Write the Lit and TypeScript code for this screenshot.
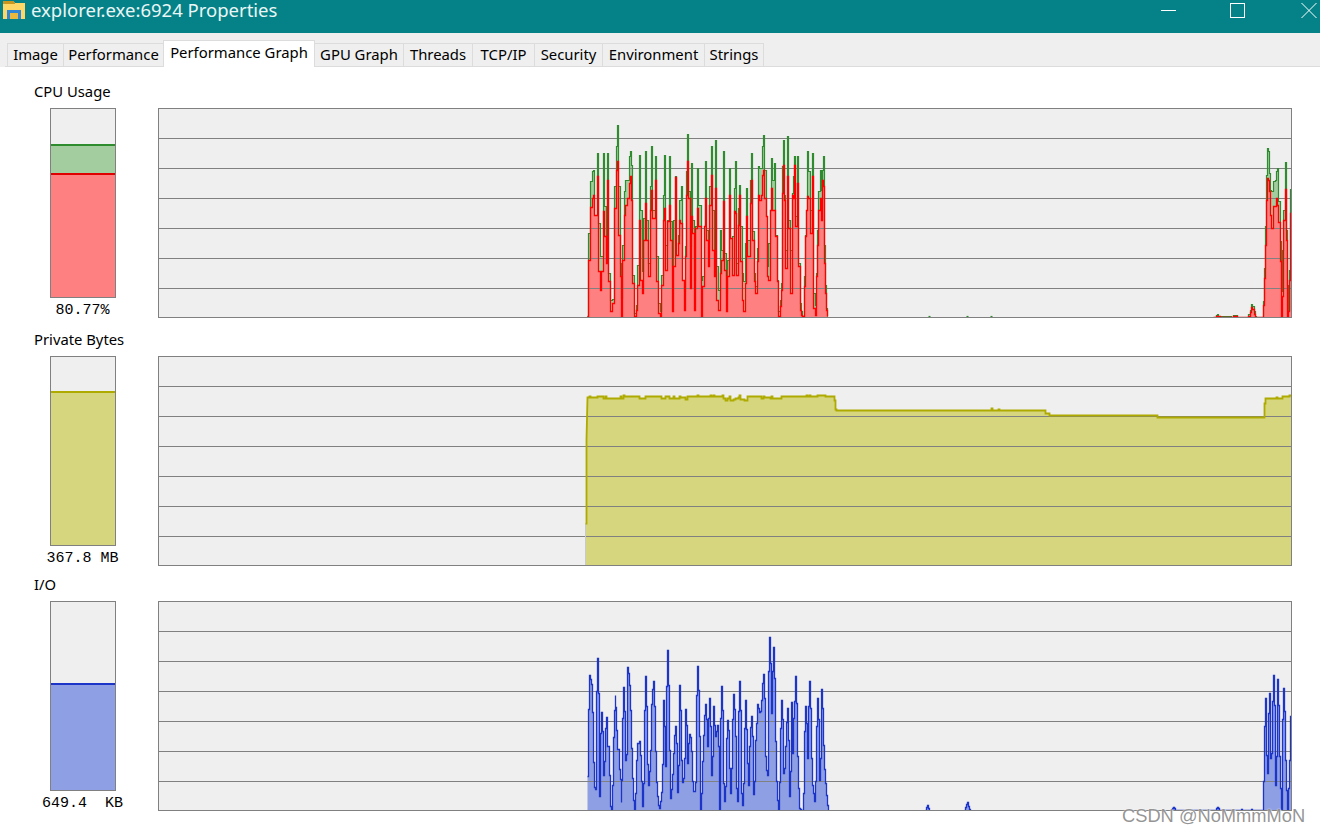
import { LitElement, html, css, svg } from "lit";
import { customElement } from "lit/decorators.js";

type Pt = [number, number];

const W = 1134;
const H = 210;
const GX = 158;

// [zoom x, green top, red top]; zoom space = 3x from page (580,120)
const CPU: number[][] = [[22,590,590],[25,340,420],[30,185,262],[36,155,235],[40,150,225],[46,285,285],[52,100,170],[57,310,455],[62,410,510],[65,410,455],[70,100,275],[75,260,350],[78,405,430],[82,100,180],[87,460,485],[92,540,575],[97,538,550],[103,200,265],[108,80,150],[112,15,125],[116,200,345],[120,430,470],[125,535,590],[128,375,420],[132,215,285],[137,180,255],[142,180,235],[147,110,190],[150,95,170],[154,135,240],[158,465,490],[163,580,590],[168,555,570],[172,435,495],[178,105,300],[183,270,480],[187,455,520],[191,295,360],[196,95,250],[201,300,360],[205,430,470],[210,200,270],[215,80,210],[220,270,295],[225,110,180],[230,410,485],[235,550,580],[240,575,590],[245,465,495],[249,225,300],[252,105,265],[258,375,450],[263,300,305],[268,110,255],[273,305,360],[277,440,575],[281,300,440],[286,170,172],[290,405,405],[294,345,370],[298,240,300],[303,200,310],[307,480,480],[312,515,570],[317,380,410],[320,155,225],[322,42,125],[326,215,235],[331,380,505],[335,130,290],[338,300,340],[343,480,570],[347,320,325],[352,145,265],[357,255,320],[363,480,590],[368,470,500],[373,320,320],[376,125,235],[381,330,360],[385,365,440],[389,200,255],[394,80,165],[399,270,390],[402,395,470],[406,60,205],[410,440,540],[415,510,570],[420,330,460],[425,390,420],[430,95,245],[434,400,450],[438,520,575],[443,420,470],[448,145,225],[453,355,355],[458,350,465],[463,205,275],[466,125,280],[470,430,465],[474,265,315],[478,195,225],[483,320,425],[487,460,540],[491,485,575],[496,370,490],[500,205,290],[505,360,410],[510,180,250],[514,100,180],[518,335,360],[522,460,485],[527,500,520],[532,385,425],[536,140,225],[540,145,240],[544,145,225],[548,80,165],[550,45,150],[554,150,235],[558,290,290],[562,440,470],[566,370,480],[570,270,270],[574,115,205],[578,180,270],[582,130,270],[587,345,350],[591,480,485],[595,575,590],[600,540,560],[604,490,510],[607,140,220],[609,60,135],[613,225,240],[617,390,445],[622,50,170],[627,300,325],[632,390,520],[636,220,225],[640,170,235],[644,110,135],[648,290,320],[653,110,190],[657,430,440],[660,550,570],[664,575,585],[668,590,590],[672,470,500],[676,345,350],[680,270,270],[682,95,230],[687,155,235],[692,270,340],[696,100,170],[700,520,565],[705,555,585],[708,460,470],[712,330,375],[716,215,270],[720,150,235],[724,210,300],[728,150,180],[730,110,200],[734,375,430],[737,495,520],[740,565,570],[743,590,590]];

// zoom space = 3x from page (1200,130)
const CPU2: number[][] = [[40,562,562],[48,556,560],[52,553,558],[60,560,562],[95,562,562],[99,557,560],[105,556,560],[112,562,562],[140,562,562],[146,552,560],[150,540,548],[154,522,532],[158,530,538],[162,545,552],[166,558,562],[169,562,562],[188,562,562],[190,515,525],[193,415,445],[197,290,345],[200,135,210],[203,55,145],[206,65,150],[209,130,185],[212,180,255],[215,185,295],[219,155,230],[225,150,228],[229,125,205],[233,115,225],[236,215,278],[240,335,395],[244,485,562],[248,360,500],[251,240,270],[255,97,178],[259,300,330],[262,465,562],[266,540,545],[269,420,450],[272,178,250],[274,178,250]];

// zoom space = 3x from page (580,630); base 541
const IO: number[][] = [[22,440],[25,238],[28,135],[31,148],[33,162],[36,248],[39,398],[42,472],[45,478],[48,380],[50,185],[52,85],[55,190],[58,500],[60,395],[62,310],[65,248],[67,305],[70,435],[73,395],[77,295],[80,262],[84,350],[87,435],[90,505],[92,530],[94,540],[97,465],[100,322],[102,240],[105,195],[107,232],[110,300],[113,358],[117,418],[120,448],[123,518],[125,450],[128,265],[130,172],[133,245],[135,392],[138,372],[141,200],[143,112],[146,130],[148,165],[152,240],[155,355],[158,445],[161,510],[164,540],[167,490],[170,390],[173,340],[178,335],[181,375],[184,455],[187,530],[191,460],[194,240],[196,138],[199,230],[201,403],[204,465],[207,425],[210,360],[213,222],[216,178],[219,155],[222,230],[225,365],[228,458],[231,500],[234,525],[237,535],[240,515],[243,487],[246,402],[249,278],[251,212],[254,288],[256,410],[258,385],[260,170],[262,60],[265,165],[268,360],[271,505],[274,478],[277,432],[280,370],[283,315],[286,290],[289,340],[292,488],[295,405],[297,248],[299,165],[301,240],[304,390],[307,458],[310,445],[313,385],[316,238],[319,285],[322,400],[325,340],[328,312],[332,322],[335,365],[338,455],[341,485],[345,458],[348,360],[350,195],[352,108],[355,180],[358,320],[361,540],[364,490],[367,395],[370,315],[373,255],[376,222],[379,268],[382,350],[385,265],[388,205],[391,290],[394,435],[397,378],[400,228],[403,285],[406,320],[409,305],[412,285],[415,350],[418,540],[421,265],[424,170],[427,240],[430,460],[433,515],[436,470],[439,325],[442,272],[445,300],[448,415],[451,490],[454,415],[457,267],[460,192],[463,238],[466,320],[469,475],[472,515],[475,245],[478,155],[481,240],[484,490],[487,525],[490,460],[493,295],[496,212],[499,297],[502,400],[505,465],[508,350],[511,292],[514,258],[517,320],[520,493],[523,455],[526,330],[530,280],[532,222],[535,235],[538,248],[541,245],[544,210],[547,160],[549,132],[552,205],[555,380],[558,420],[561,435],[564,125],[568,22],[571,100],[574,250],[576,125],[579,52],[582,145],[585,335],[588,455],[591,510],[594,541],[598,458],[601,295],[604,212],[607,268],[610,430],[613,415],[616,350],[619,278],[622,235],[625,330],[628,500],[630,425],[633,217],[636,370],[639,265],[642,215],[646,140],[649,220],[652,380],[655,475],[658,535],[661,538],[664,541],[670,490],[673,305],[676,230],[679,280],[682,385],[685,228],[688,155],[691,235],[694,385],[697,465],[700,490],[703,515],[706,455],[709,290],[712,205],[715,268],[718,450],[721,385],[724,178],[727,235],[730,345],[733,418],[736,460],[739,495],[742,525],[744,541]];

// zoom space = 3x from page (1100,660); base 451
const IO2: number[][] = [[214,451],[217,445],[220,442],[223,445],[226,451],[346,451],[349,445],[352,442],[355,445],[358,451],[422,451],[425,448],[428,451],[452,451],[455,448],[458,451],[488,451],[490,365],[493,198],[496,115],[499,285],[502,340],[505,160],[508,100],[511,295],[514,280],[517,125],[520,45],[523,135],[526,375],[529,290],[532,57],[535,135],[538,290],[541,385],[544,450],[547,178],[550,85],[553,155],[556,300],[559,390],[562,450],[565,385],[568,300],[572,168],[574,168]];

// page coordinates of the two faint blips on the flat part of the I/O line
const IO_BLIPS: Pt[][] = [
  [[925, 810], [926, 807], [927, 805], [928, 808], [929, 810]],
  [[964, 810], [965, 807], [966, 804], [967, 802], [968, 806], [969, 809], [970, 810]],
];

// zoom space = 3x from page (570,380)
const MEM_A: number[][] = [[52,52],[58,49],[63,53],[80,53],[82,49],[98,49],[100,54],[106,50],[112,54],[148,54],[150,50],[153,54],[160,47],[165,50],[207,50],[209,54],[225,54],[227,50],[272,50],[274,54],[285,54],[287,50],[297,50],[299,54],[309,54],[311,50],[315,54],[327,54],[329,50],[334,52],[341,52],[346,59],[351,50],[381,50],[383,47],[386,50],[418,50],[420,46],[424,50],[430,47],[434,50],[455,50],[457,46],[462,56],[467,60],[473,54],[478,50],[484,60],[490,58],[497,54],[506,53],[509,46],[512,58],[522,60],[532,50],[568,50],[574,56],[581,50],[585,53],[597,53],[600,56],[604,50],[610,56],[630,56],[633,50],[706,50],[708,46],[712,50],[717,47],[722,50],[741,50],[743,46],[764,46],[766,50],[790,50],[793,60],[797,90]];

// zoom space = 3x from page (820,385)
const MEM_B: number[][] = [[46,74],[430,77],[510,77],[514,71],[518,77],[530,77],[534,73],[538,77],[672,77],[675,85],[687,90],[820,92],[1008,92],[1011,98],[1262,96],[1330,96],[1333,55],[1337,41],[1348,39],[1370,36],[1376,39],[1388,35],[1408,32],[1414,32]];

const snap = (v: number) => Math.floor(v) + 0.5;

function fromZoom(rows: number[][], col: number, ox: number, oy: number, rowTop: number): Pt[] {
  return rows.map((r) => [snap(ox + r[0] / 3 - GX), snap(oy + r[col] / 3 - rowTop)] as Pt);
}

// Step line: a sample holds until the next one, except a local peak, which is a single pixel wide.
function steps(pts: Pt[]): Pt[] {
  const out: Pt[] = [];
  pts.forEach((p, i) => {
    const prev = pts[i - 1];
    const next = pts[i + 1];
    out.push(p);
    if (!next) return;
    const peak = prev && p[1] < prev[1] && p[1] < next[1];
    const end = peak ? Math.min(p[0] + 1, next[0]) : next[0];
    out.push([end, p[1]], [end, next[1]]);
  });
  return out;
}

const str = (pts: Pt[]) => pts.map((p) => `${p[0]},${p[1]}`).join(" ");
const stepped = (pts: Pt[]) => str(steps(pts));

function area(pts: Pt[]): string {
  const a = pts[0];
  const z = pts[pts.length - 1];
  return `${a[0]},${H} ${stepped(pts)} ${z[0]},${H}`;
}

const grid = [30, 60, 90, 120, 150, 180];

function gridLines() {
  return grid.map((y) => svg`<line class="grid" x1="0" x2=${W} y1=${y + 0.5} y2=${y + 0.5}></line>`);
}

function cpuChart() {
  const green = [fromZoom(CPU, 1, 580, 120, 108), fromZoom(CPU2, 1, 1200, 130, 108)];
  const red = [fromZoom(CPU, 2, 580, 120, 108), fromZoom(CPU2, 2, 1200, 130, 108)];
  const ticks: Pt[][] = [928, 966, 990].map((x) => [[x - GX + 0.5, H - 1.5], [x + 2 - GX + 0.5, H - 1.5]] as Pt[]);
  return svg`
    ${green.map((p) => svg`<polygon class="fill-green" points=${area(p)}></polygon>`)}
    ${red.map((p) => svg`<polygon class="fill-red" points=${area(p)}></polygon>`)}
    ${gridLines()}
    ${green.map((p) => svg`<polyline class="line-green" points=${stepped(p)}></polyline>`)}
    ${ticks.map((p) => svg`<polyline class="line-green" points=${stepped(p)}></polyline>`)}
    ${red.map((p) => svg`<polyline class="line-red" points=${stepped(p)}></polyline>`)}
  `;
}

function memChart() {
  const start: Pt[] = [[427.5, H], [427.5, 167.5], [428.5, 167.5], [428.5, 83.5]];
  const a = fromZoom(MEM_A, 1, 570, 380, 356);
  const b = fromZoom(MEM_B, 1, 820, 385, 356);
  const top = [...a, ...b];
  return svg`
    <polygon class="fill-yellow" points="427.5,${H} 427.5,167.5 428.5,167.5 428.5,83.5 ${stepped(top)} ${top[top.length - 1][0]},${H}"></polygon>
    ${gridLines()}
    <polyline class="line-pale" points="${str(start.slice(0, 2))}"></polyline>
    <polyline class="line-yellow" points="${str(start.slice(1))} ${stepped(top)}"></polyline>
  `;
}

function ioChart() {
  const a = fromZoom(IO, 1, 580, 630, 601);
  const b = fromZoom(IO2, 1, 1100, 660, 601);
  const blips = IO_BLIPS.map((p) => p.map(([x, y]) => [snap(x - GX), snap(y - 601)] as Pt));
  const all = [a, b, ...blips];
  return svg`
    ${all.map((p) => svg`<polygon class="fill-blue" points=${area(p)}></polygon>`)}
    ${gridLines()}
    ${all.map((p) => svg`<polyline class="line-blue" points=${stepped(p)}></polyline>`)}
  `;
}

const TABS: { name: string; w: number }[] = [
  { name: "Image", w: 57 },
  { name: "Performance", w: 100 },
  { name: "Performance Graph", w: 152 },
  { name: "GPU Graph", w: 89 },
  { name: "Threads", w: 69 },
  { name: "TCP/IP", w: 62 },
  { name: "Security", w: 68 },
  { name: "Environment", w: 102 },
  { name: "Strings", w: 59 },
];

interface Seg { cls: string; h: number; }
interface Row { label: string; value: string; segs: Seg[]; chart: () => unknown; cls: string; }

const ROWS: Row[] = [
  { label: "CPU Usage", value: "80.77%", segs: [{ cls: "m-green", h: 29 }, { cls: "m-red", h: 124 }], chart: cpuChart, cls: "" },
  { label: "Private Bytes", value: "367.8 MB", segs: [{ cls: "m-yellow", h: 154 }], chart: memChart, cls: "" },
  { label: "I/O", value: "649.4  KB", segs: [{ cls: "m-blue", h: 107 }], chart: ioChart, cls: "tight" },
];

@customElement("app-root")
export class AppRoot extends LitElement {
  static styles = css`
    :host {
      display: block;
      position: relative;
      width: 1320px;
      height: 833px;
      overflow: hidden;
      background: #fff;
      font-family: "Noto Sans", "Liberation Sans", sans-serif;
      color: #000;
    }
    .title {
      height: 33px;
      background: #058287;
      color: #fff;
      display: flex;
      align-items: flex-start;
    }
    .logo { margin: 1px 0 0 3px; width: 22px; height: 18px; flex: none; }
    .caption {
      margin-left: 6px;
      font-size: 18.5px;
      line-height: 20px;
      white-space: nowrap;
      color: #eaf6f6;
    }
    .spacer { flex: 1; }
    .ctl { flex: none; display: block; margin-top: 3px; }
    .ctl.min { margin-right: 54px; }
    .ctl.max { margin-right: 56px; }
    .ctl.close { margin-right: 3px; }
    .ctl path, .ctl rect { fill: none; stroke: #fff; stroke-width: 1; }
    .strip {
      height: 34px;
      background: #efefef;
      box-sizing: border-box;
      display: flex;
      align-items: flex-end;
      padding-left: 7px;
      position: relative;
    }
    .strip::after {
      content: "";
      position: absolute;
      left: 5px;
      right: 0;
      bottom: 0;
      height: 1px;
      background: #dcdcdc;
    }
    .tab {
      height: 24px;
      box-sizing: border-box;
      border: 1px solid #dcdcdc;
      border-left-width: 0;
      font-size: 14.85px;
      line-height: 21px;
      text-align: center;
      white-space: nowrap;
      flex: none;
    }
    .tab:first-child { border-left-width: 1px; }
    .tab.on {
      height: 27px;
      background: #fff;
      border-bottom: 0;
      position: relative;
      z-index: 1;
      line-height: 23px;
      margin-left: -1px;
      border-left-width: 1px;
    }
    .panel { padding: 16px 28px 0 34px; display: flex; flex-direction: column; gap: 13px; }
    .row { display: flex; flex-direction: column; gap: 7px; }
    .row.tight { margin-top: -3px; }
    .label { font-size: 14.8px; line-height: 16px; height: 18px; white-space: nowrap; }
    .body { display: flex; height: 210px; padding-left: 16px; }
    .gauge { width: 66px; flex: none; display: flex; flex-direction: column; align-items: center; }
    .meter {
      width: 66px;
      height: 190px;
      box-sizing: border-box;
      border: 1px solid #808080;
      background: #efefef;
      display: flex;
      flex-direction: column;
      justify-content: flex-end;
      flex: none;
    }
    .seg { border-top: 2px solid; box-sizing: border-box; }
    .m-green { background: #a3cc9f; border-color: #2e8b2e; }
    .m-red { background: #ff8080; border-color: #e00000; }
    .m-yellow { background: #d6d67f; border-color: #aeaa00; }
    .m-blue { background: #8f9fe3; border-color: #1c35c8; }
    .value {
      font-family: "Liberation Mono", monospace;
      font-size: 15px;
      line-height: 20px;
      white-space: pre;
      height: 20px;
      margin: 3px 1px 0 0;
    }
    .chart { display: block; margin-left: 42px; flex: none; background: #efefef; }
    .frame { fill: none; stroke: #808080; stroke-width: 1; }
    .grid { stroke: #808080; stroke-width: 1; }
    .fill-green { fill: #a3cc9f; }
    .fill-red { fill: #ff8080; }
    .fill-yellow { fill: #d6d67f; }
    .fill-blue { fill: #8f9fe3; }
    polyline { fill: none; stroke-linejoin: miter; }
    .line-green { stroke: #2e8b2e; stroke-width: 1.2; }
    .line-red { stroke: #ff0000; stroke-width: 1.3; }
    .line-yellow { stroke: #aeaa00; stroke-width: 1.8; }
    .line-pale { stroke: #c9c9c9; stroke-width: 1; }
    .line-blue { stroke: #1c35c8; stroke-width: 1.3; }
    .mark {
      position: absolute;
      left: 1122px;
      top: 805px;
      font-family: "Liberation Sans", sans-serif;
      font-size: 18.3px;
      line-height: 22px;
      color: rgba(130, 130, 130, 0.85);
      text-shadow: 0 0 1.5px #fff, 1px 1px 1px rgba(255, 255, 255, 0.8);
      white-space: nowrap;
    }
  `;

  render() {
    return html`
      <div class="title">
        <svg class="logo" viewBox="0 0 22 18">
          <path d="M0 0h10l2 2h10v16H0z" fill="#ffd766"></path>
          <path d="M0 0h10l2 2v1H0z" fill="#c9961f"></path>
          <path d="M4 9h14v9h-3v-6H7v6H4z" fill="#2f86d6"></path>
          <rect x="7" y="12" width="8" height="6" fill="#e8b93e"></rect>
        </svg>
        <div class="caption">explorer.exe:6924 Properties</div>
        <div class="spacer"></div>
        <svg class="ctl min" width="15" height="15" viewBox="0 0 15 15"><path d="M0 7.5h15"></path></svg>
        <svg class="ctl max" width="15" height="15" viewBox="0 0 15 15"><rect x=".5" y=".5" width="14" height="14"></rect></svg>
        <svg class="ctl close" width="16" height="15" viewBox="0 0 16 15"><path d="M.5 0L15.5 15M15.5 0L.5 15"></path></svg>
      </div>
      <div class="strip">
        ${TABS.map((t, i) => html`<div class="tab ${i === 2 ? "on" : ""}" style="width:${t.w}px">${t.name}</div>`)}
      </div>
      <div class="panel">
        ${ROWS.map(
          (r) => html`
            <div class="row ${r.cls}">
              <div class="label">${r.label}</div>
              <div class="body">
                <div class="gauge">
                  <div class="meter">
                    ${r.segs.map((s) => html`<div class="seg ${s.cls}" style="height:${s.h}px"></div>`)}
                  </div>
                  <div class="value">${r.value}</div>
                </div>
                <svg class="chart" width=${W} height=${H} viewBox="0 0 ${W} ${H}">
                  ${r.chart()}
                  <rect class="frame" x=".5" y=".5" width=${W - 1} height=${H - 1}></rect>
                </svg>
              </div>
            </div>
          `
        )}
      </div>
      <div class="mark">CSDN @NoMmmMoN</div>
    `;
  }
}
